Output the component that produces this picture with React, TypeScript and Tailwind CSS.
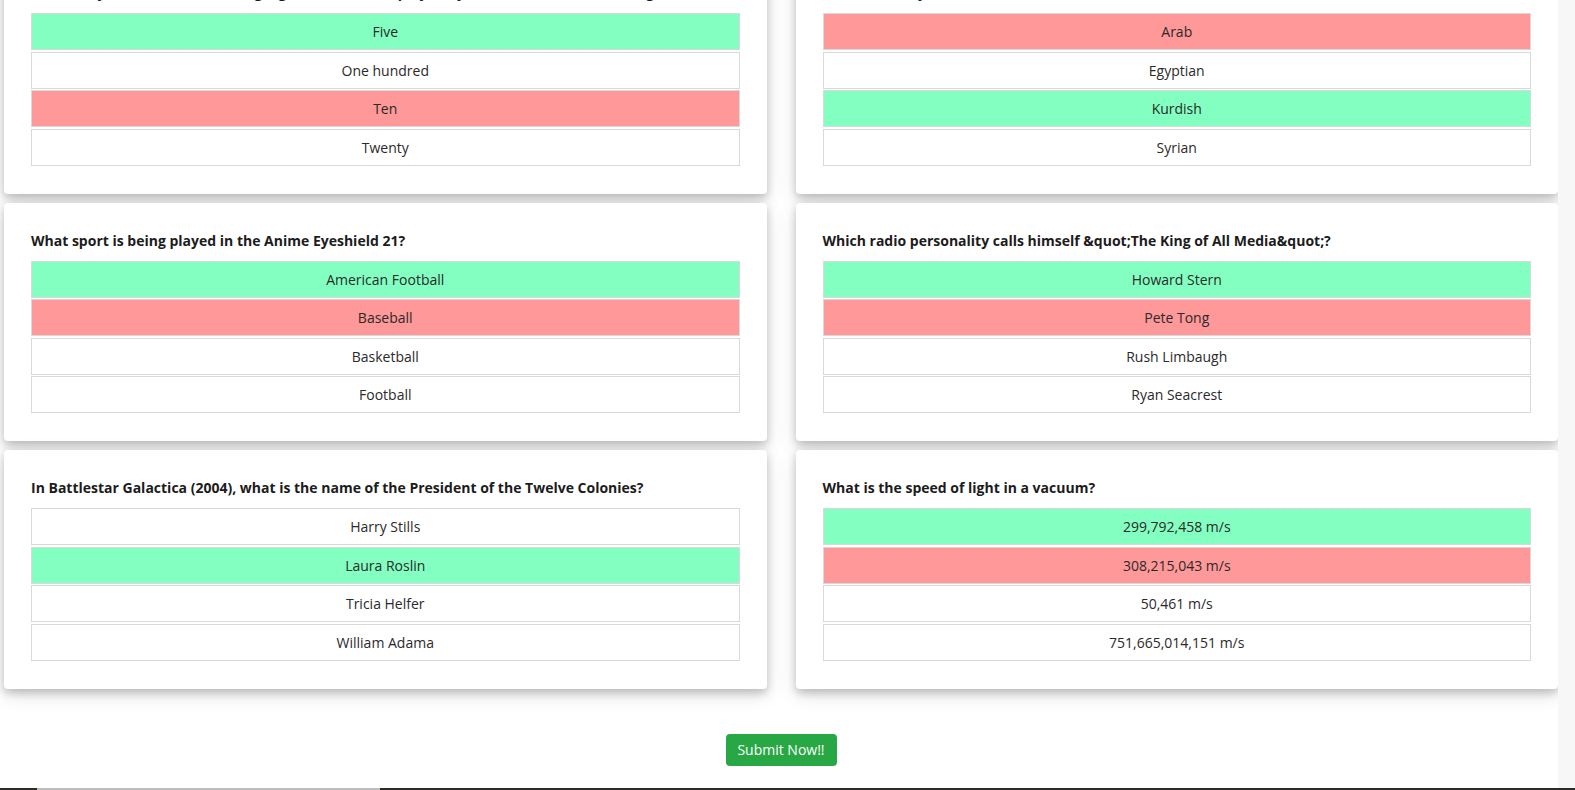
type Choice = { text: string; state?: 'right' | 'wrong' };
type Question = { q: string; choices: Choice[] };

const questions: Question[] = [
  {
    q: 'How many dice are used in a single game of Yahtzee played by the standard rules of the game?',
    choices: [
      { text: 'Five', state: 'right' },
      { text: 'One hundred' },
      { text: 'Ten', state: 'wrong' },
      { text: 'Twenty' },
    ],
  },
  {
    q: 'What ethnicity was Saladin?',
    choices: [
      { text: 'Arab', state: 'wrong' },
      { text: 'Egyptian' },
      { text: 'Kurdish', state: 'right' },
      { text: 'Syrian' },
    ],
  },
  {
    q: 'What sport is being played in the Anime Eyeshield 21?',
    choices: [
      { text: 'American Football', state: 'right' },
      { text: 'Baseball', state: 'wrong' },
      { text: 'Basketball' },
      { text: 'Football' },
    ],
  },
  {
    q: 'Which radio personality calls himself &quot;The King of All Media&quot;?',
    choices: [
      { text: 'Howard Stern', state: 'right' },
      { text: 'Pete Tong', state: 'wrong' },
      { text: 'Rush Limbaugh' },
      { text: 'Ryan Seacrest' },
    ],
  },
  {
    q: 'In Battlestar Galactica (2004), what is the name of the President of the Twelve Colonies?',
    choices: [
      { text: 'Harry Stills' },
      { text: 'Laura Roslin', state: 'right' },
      { text: 'Tricia Helfer' },
      { text: 'William Adama' },
    ],
  },
  {
    q: 'What is the speed of light in a vacuum?',
    choices: [
      { text: '299,792,458 m/s', state: 'right' },
      { text: '308,215,043 m/s', state: 'wrong' },
      { text: '50,461 m/s' },
      { text: '751,665,014,151 m/s' },
    ],
  },
];

const QuestionCard = ({ item }: { item: Question }) => (
  <div className="rounded-[4px] bg-white px-[27px] pt-[28px] pb-[28px] shadow-[0_4px_8px_0_rgba(0,0,0,0.2),0_6px_20px_0_rgba(0,0,0,0.12)]">
    <p className="mb-[10px] h-[20px] text-[14px] font-bold leading-[20px] text-[#1c1c1c]">{item.q}</p>
    <div className="flex flex-col gap-[1.5px]">
      {item.choices.map((c) => (
        <div
          key={c.text}
          className={
            'flex h-[37px] items-center justify-center border border-[#d9d9d9] text-[14px] text-[#2a2a2a] ' +
            (c.state === 'right' ? 'bg-[#82ffc1]' : c.state === 'wrong' ? 'bg-[#ff9898]' : 'bg-white')
          }
        >
          {c.text}
        </div>
      ))}
    </div>
  </div>
);

export default function App() {
  return (
    <div className="flex h-[790px] w-[1575px] flex-col overflow-hidden bg-white font-['Open_Sans',sans-serif]">
      <div className="flex flex-1">
        <div className="flex flex-1 flex-col pl-[4px]">
          <div className="mt-[-45px] grid grid-cols-2 gap-x-[29px] gap-y-[9px]">
            {questions.map((item) => (
              <QuestionCard key={item.q} item={item} />
            ))}
          </div>
          <div className="mt-[45px] flex justify-center">
            <button
              type="button"
              className="h-[32px] w-[111px] rounded-[4px] bg-[#28a745] text-[14px] text-white"
            >
              Submit Now!!
            </button>
          </div>
        </div>
        <div className="w-[17px] bg-[#f7f7f7]" />
      </div>
      <div className="flex h-[2px]">
        <div className="w-[37px] bg-[#2b2b28]" />
        <div className="w-[343px] bg-[#bdbdbd]" />
        <div className="flex-1 bg-[#2b2b28]" />
      </div>
    </div>
  );
}
